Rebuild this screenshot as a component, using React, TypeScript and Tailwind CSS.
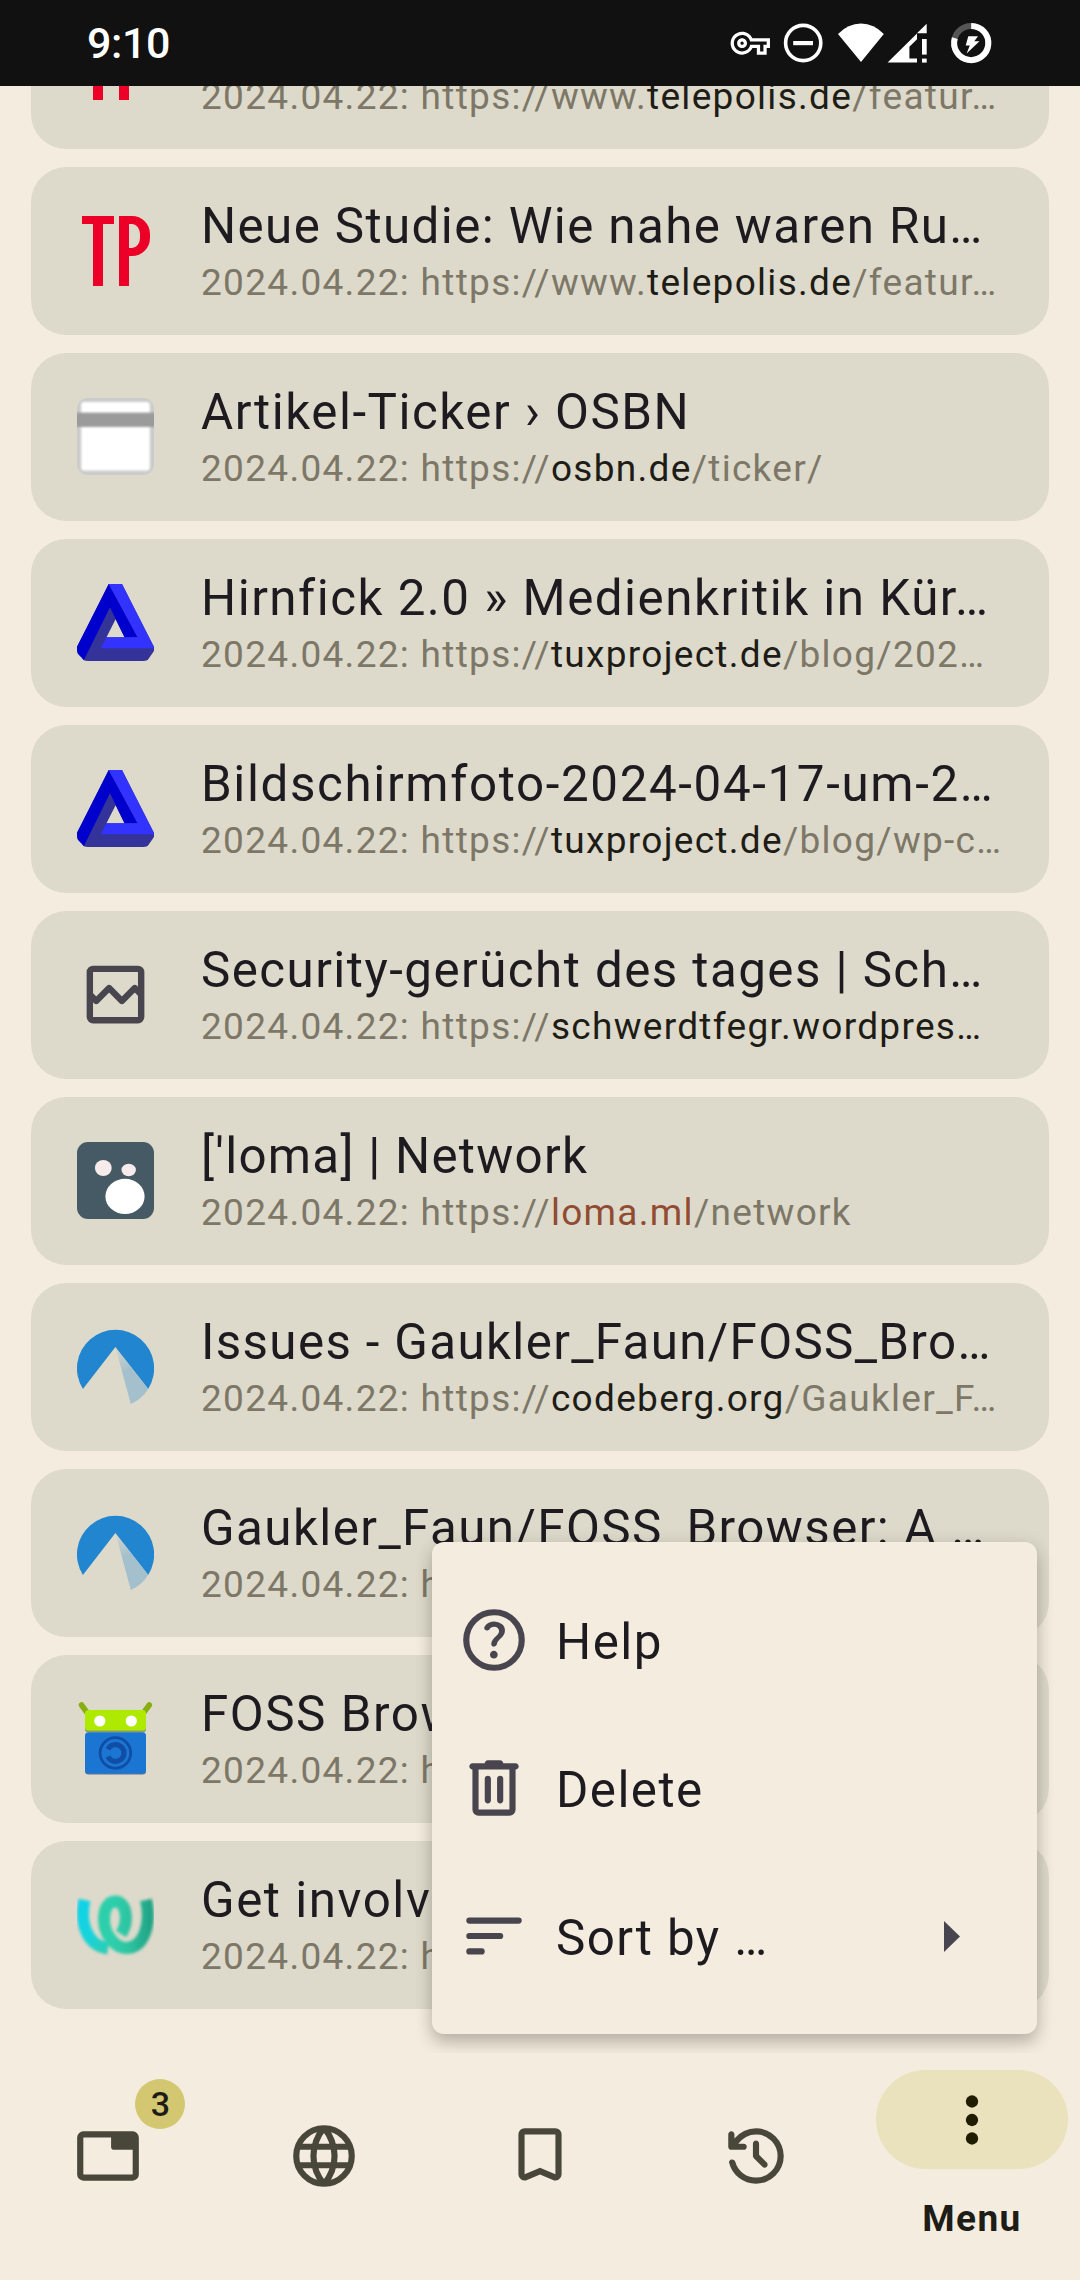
import type { ReactNode } from "react";

function TelepolisIcon() {
  return (
    <div className="flex h-[77px] w-[77px] items-start gap-[5px] pt-[3.5px] pl-[5px]">
      <div className="flex flex-col items-center">
        <div className="h-[8.5px] w-[32px] bg-[#ec0028]" />
        <div className="h-[61.5px] w-[10px] bg-[#ec0028]" />
      </div>
      <div className="flex flex-col">
        <div className="h-[40px] w-[31px] rounded-r-[18px] border-y-[8.5px] border-r-[10px] border-l-[10px] border-[#ec0028]" />
        <div className="h-[30px] w-[10px] bg-[#ec0028]" />
      </div>
    </div>
  );
}

function WindowIcon() {
  return (
    <div className="h-[77px] w-[77px] overflow-hidden rounded-[11px] bg-[#cbcbcb]">
      <svg viewBox="0 0 77 77" className="h-full w-full">
        <defs>
          <filter id="soft" x="-10%" y="-10%" width="120%" height="120%">
            <feGaussianBlur stdDeviation="0.9" />
          </filter>
        </defs>
        <rect x="4.2" y="4" width="68.6" height="68.5" rx="3" fill="#fff" filter="url(#soft)" />
        <rect x="-4" y="14.6" width="85" height="14.4" fill="#9b9b9b" filter="url(#soft)" />
      </svg>
    </div>
  );
}

function TriangleIcon() {
  return (
    <div className="h-[77px] w-[77px] overflow-hidden rounded-[11px]">
      <svg viewBox="0 0 77 77" className="h-full w-full">
        <path d="M31.7 0H45L77 63v4L70 77H6.9L0 64Z M38.6 35.3L29.5 53.3H47.5Z" fillRule="evenodd" fill="#333399" />
        <path d="M31.7 0L0 62.5V69L6.9 76L33 23.3L47.5 53.3H60.6Z" fill="#0000cc" />
        <path d="M31.7 0H45L77 63V64.3H23.8L29.5 53.3H60.6Z" fill="#3333ff" />
      </svg>
    </div>
  );
}

function BrokenImageIcon() {
  return (
    <svg viewBox="0 0 960 960" className="h-[77px] w-[77px]" fill="none" stroke="#49454f" strokeWidth="80" strokeLinejoin="round">
      <rect x="160" y="160" width="640" height="640" rx="40" />
      <path d="M160 480L240 560L400 400L560 560L720 400L800 480" />
    </svg>
  );
}

function LomaIcon() {
  return (
    <svg viewBox="0 0 77 77" className="h-[77px] w-[77px] rounded-[11px] bg-[#455a64]">
      <ellipse cx="26.3" cy="26" rx="8.4" ry="8" fill="#f7ebeb" />
      <ellipse cx="51.7" cy="28" rx="7.2" ry="6.2" fill="#f7ebeb" />
      <ellipse cx="48" cy="54.4" rx="19.6" ry="17.6" fill="#fff" />
    </svg>
  );
}

function CodebergIcon() {
  return (
    <svg viewBox="0 0 77 77" className="h-[77px] w-[77px]">
      <defs>
        <linearGradient id="slope" x1="40" y1="22" x2="56" y2="60" gradientUnits="userSpaceOnUse">
          <stop offset="0" stopColor="#a4c0cd" stopOpacity="0.2" />
          <stop offset="0.55" stopColor="#a4c0cd" />
        </linearGradient>
      </defs>
      <path d="M5.9 61A38.6 38.6 0 1 1 71.2 61L38.4 19Z" fill="#2185d0" />
      <path d="M38.4 19L71.2 61A39 39 0 0 1 53.8 76Z" fill="url(#slope)" />
    </svg>
  );
}

function FDroidIcon() {
  return (
    <svg viewBox="0 0 77 77" className="h-[77px] w-[77px]">
      <path d="M4.500 5L10 12.500M72.300 5L66.800 12.500" stroke="#88ae10" strokeWidth="5.500" strokeLinecap="round" />
      <rect x="8" y="11" width="61" height="21.4" rx="3.5" fill="#8c9f61" />
      <rect x="8" y="10" width="61" height="20.4" rx="3.5" fill="#aeea00" />
      <circle cx="22.8" cy="21" r="5.6" fill="#fff" />
      <circle cx="54.3" cy="21" r="5.6" fill="#fff" />
      <rect x="8" y="34" width="61" height="40.6" rx="3.5" fill="#5a7396" />
      <rect x="8" y="32.3" width="61" height="41.2" rx="3.5" fill="#1b76d3" />
      <circle cx="38.4" cy="53" r="15.3" fill="none" stroke="#104ea6" strokeWidth="2.8" />
      <path d="M31 49.3A8.4 8.4 0 1 1 31 56.7" fill="none" stroke="#104ea6" strokeWidth="5.2" />
    </svg>
  );
}

function WeblateIcon() {
  return (
    <div className="h-[77px] w-[77px] overflow-hidden">
      <svg viewBox="0 0 77 77" className="h-full w-full blur-[1.6px]" fill="none" strokeWidth="12">
        <defs>
          <linearGradient id="wLeft" x1="2" y1="20" x2="32" y2="62" gradientUnits="userSpaceOnUse">
            <stop offset="0" stopColor="#10d3e6" />
            <stop offset="0.6" stopColor="#17d3db" />
            <stop offset="1" stopColor="#2bcdb4" />
          </linearGradient>
          <linearGradient id="wRight" x1="36" y1="0" x2="74" y2="0" gradientUnits="userSpaceOnUse">
            <stop offset="0" stopColor="#2ccfab" />
            <stop offset="0.4" stopColor="#2dc4a2" />
            <stop offset="1" stopColor="#1fa385" />
          </linearGradient>
        </defs>
        <path d="M7.500 14C2 38 11 60 31 62.500" stroke="url(#wLeft)" />
        <path d="M44 48C52 36 50 15.500 38.400 15.500C25 15.500 24 40 33 52C38 59 43 62 49 62C67 62 74.500 38 69 14" stroke="url(#wRight)" />
      </svg>
    </div>
  );
}

type Entry = {
  icon: ReactNode;
  title: string;
  tracking?: string;
  prefix: string;
  domain: string;
  path: string;
  insecure?: boolean;
};

const entries: Entry[] = [
  { icon: <TelepolisIcon />, title: "Telepolis", prefix: "https://www.", domain: "telepolis.de", path: "/featur…" },
  { icon: <TelepolisIcon />, title: "Neue Studie: Wie nahe waren Ru…", tracking: "tracking-[1.38px]", prefix: "https://www.", domain: "telepolis.de", path: "/featur…" },
  { icon: <WindowIcon />, title: "Artikel-Ticker › OSBN", tracking: "tracking-[1.5px]", prefix: "https://", domain: "osbn.de", path: "/ticker/" },
  { icon: <TriangleIcon />, title: "Hirnfick 2.0 » Medienkritik in Kür…", tracking: "tracking-[1.48px]", prefix: "https://", domain: "tuxproject.de", path: "/blog/202…" },
  { icon: <TriangleIcon />, title: "Bildschirmfoto-2024-04-17-um-2…", tracking: "tracking-[1.62px]", prefix: "https://", domain: "tuxproject.de", path: "/blog/wp-c…" },
  { icon: <BrokenImageIcon />, title: "Security-gerücht des tages | Sch…", tracking: "tracking-[1.44px]", prefix: "https://", domain: "schwerdtfegr.wordpres…", path: "" },
  { icon: <LomaIcon />, title: "['loma] | Network", tracking: "tracking-[1.25px]", prefix: "https://", domain: "loma.ml", path: "/network", insecure: true },
  { icon: <CodebergIcon />, title: "Issues - Gaukler_Faun/FOSS_Bro…", tracking: "tracking-[1.34px]", prefix: "https://", domain: "codeberg.org", path: "/Gaukler_F…" },
  { icon: <CodebergIcon />, title: "Gaukler_Faun/FOSS_Browser: A …", tracking: "tracking-[1.42px]", prefix: "https://", domain: "codeberg.org", path: "/Gaukler_F…" },
  { icon: <FDroidIcon />, title: "FOSS Browser", prefix: "https://", domain: "f-droid.org", path: "/" },
  { icon: <WeblateIcon />, title: "Get involved", prefix: "https://", domain: "weblate.org", path: "/" },
];

function Card({ entry }: { entry: Entry }) {
  return (
    <div className="flex h-[168px] shrink-0 overflow-hidden rounded-[35px] bg-[#dedacb] pl-[46px]">
      <div className="mt-[45px] mr-[47px] shrink-0">{entry.icon}</div>
      <div className="min-w-0 pt-[29px] whitespace-nowrap">
        <div className={"h-[60px] text-[49.33px] leading-[60px] text-[#1d1b20] " + (entry.tracking ?? "tracking-[1.54px]")}>
          {entry.title}
        </div>
        <div className="mt-[3px] text-[37px] leading-[48px] tracking-[1.3px] text-[#7c7767]">
          2024.04.22: {entry.prefix}
          <span className={entry.insecure ? "text-[#904b33]" : "text-[#1d1c16]"}>{entry.domain}</span>
          {entry.path}
        </div>
      </div>
    </div>
  );
}

function Symbol({ children }: { children: ReactNode }) {
  return (
    <svg viewBox="0 -960 960 960" className="h-[74px] w-[74px]" fill="currentColor">
      {children}
    </svg>
  );
}

function StatusBar() {
  return (
    <header className="flex h-[86px] shrink-0 items-center justify-between bg-[#111111] pl-[87px] text-white">
      <span className="text-[43px] leading-[86px] font-medium tracking-[-0.4px]">9:10</span>
      <svg viewBox="720 0 280 86" className="mr-[80px] h-[86px] w-[280px]" fill="#fff">
        <path transform="translate(730.6 23.500) scale(1.64)" d="M22 19h-6v-4h-2.680c-1.140 2.420-3.600 4-6.320 4-3.860 0-7-3.140-7-7s3.140-7 7-7c2.720 0 5.170 1.580 6.320 4H24v6h-2v4zm-4-2h2v-4h2v-2H11.940l-.23-.67C11.010 8.340 9.110 7 7 7c-2.760 0-5 2.240-5 5s2.240 5 5 5c2.110 0 4.010-1.340 4.710-3.330l.23-.67H18v4zM7 15c-1.650 0-3-1.350-3-3s1.350-3 3-3 3 1.350 3 3-1.350 3-3 3zm0-4c-.55 0-1 .45-1 1s.45 1 1 1 1-.45 1-1-.45-1-1-1z" />
        <circle cx="803.2" cy="43" r="17.6" fill="none" stroke="#fff" strokeWidth="3.600" />
        <rect x="793.2" y="41" width="19.800" height="4.200" />
        <path d="M861 62L838 34Q848 23.500 861 23.500T883.800 34Z" />
        <path d="M887.6 62.600L917 33.500V39.300L909.400 46.700V58.600H917V62.600Z" />
        <path d="M926.700 23.700V33.200H917Z" />
        <rect x="922" y="39" width="4.700" height="15.600" />
        <rect x="922" y="58.600" width="4.700" height="4" />
        <circle cx="971.200" cy="43" r="17.100" fill="none" stroke="#555" strokeWidth="6" />
        <path d="M971.200 25.900A17.100 17.100 0 1 1 954.800 38.200" fill="none" stroke="#fff" strokeWidth="6" />
        <path d="M968.300 36.200H978L974.300 41.300H979.500L966.600 53.500L969.800 45.600L965.700 45.400Z" />
      </svg>
    </header>
  );
}

function PopupMenu() {
  return (
    <div className="absolute top-[1456px] left-[432px] flex h-[492px] w-[605px] flex-col rounded-[12px] bg-[#f4eddf] py-[24px] text-[49.33px] tracking-[1.45px] text-[#1d1b20] shadow-[0_9px_16px_rgba(60,58,45,0.28),0_1px_18px_rgba(60,58,45,0.10)]">
      <div className="flex h-[148px] items-center pl-[25px]">
        <span className="mr-[25px] text-[#49454f]">
          <Symbol>
            <path d="M478-240q21 0 35.500-14.500T528-290q0-21-14.500-35.500T478-340q-21 0-35.500 14.500T428-290q0 21 14.500 35.500T478-240Zm2 160q-83 0-156-31.500T197-197q-54-54-85.500-127T80-480q0-83 31.500-156T197-763q54-54 127-85.500T480-880q83 0 156 31.500T763-763q54 54 85.500 127T880-480q0 83-31.500 156T763-197q-54 54-127 85.500T480-80Zm0-80q134 0 227-93t93-227q0-134-93-227t-227-93q-134 0-227 93t-93 227q0 134 93 227t227 93Zm0-320Zm4-172q25 0 43.500 16t18.500 40q0 22-13.500 39T502-525q-23 20-40.500 44T444-427q0 14 10.500 23.500T479-394q15 0 25.500-10t13.500-25q4-21 18-37.500t30-31.500q23-22 39.500-48t16.500-58q0-51-41.500-83.500T484-720q-38 0-72.500 16T359-655q-7 12-4.500 25.500T368-609q14 8 29 5t25-17q11-15 27.500-23t34.500-8Z" />
          </Symbol>
        </span>
        <span className="pt-[4px] leading-[60px]">Help</span>
      </div>
      <div className="flex h-[148px] items-center pl-[25px]">
        <span className="mr-[25px] text-[#49454f]">
          <Symbol>
            <path d="M280-120q-33 0-56.500-23.500T200-200v-520q-17 0-28.500-11.500T160-760q0-17 11.500-28.500T200-800h160q0-17 11.500-28.500T400-840h160q17 0 28.500 11.500T600-800h160q17 0 28.500 11.500T800-760q0 17-11.500 28.500T760-720v520q0 33-23.500 56.500T680-120H280Zm400-600H280v520h400v-520ZM400-280q17 0 28.500-11.500T440-320v-280q0-17-11.500-28.500T400-640q-17 0-28.500 11.500T360-600v280q0 17 11.500 28.500T400-280Zm160 0q17 0 28.500-11.500T600-320v-280q0-17-11.500-28.500T560-640q-17 0-28.500 11.500T520-600v280q0 17 11.500 28.500T560-280Z" />
          </Symbol>
        </span>
        <span className="pt-[4px] leading-[60px]">Delete</span>
      </div>
      <div className="flex h-[148px] items-center pl-[25px]">
        <span className="mr-[25px] text-[#49454f]">
          <Symbol>
            <path d="M160-680H800M160-480H560M160-280H320" fill="none" stroke="currentColor" strokeWidth="80" strokeLinecap="round" />
          </Symbol>
        </span>
        <span className="flex-1 pt-[4px] leading-[60px]">Sort by …</span>
        <svg viewBox="0 0 16 31" className="mr-[77px] h-[31px] w-[16px]" fill="#49454f">
          <path d="M0 0L16 15.500L0 31Z" />
        </svg>
      </div>
    </div>
  );
}

function BottomNav() {
  return (
    <nav className="grid h-[227px] shrink-0 grid-cols-5 text-[#49473a]">
      <div className="relative flex justify-center pt-[66px]">
        <Symbol>
          <rect x="120" y="-760" width="720" height="560" rx="40" fill="none" stroke="currentColor" strokeWidth="80" />
          <path d="M520-780H840V-560H560Q520-560 520-600Z" />
        </Symbol>
        <span className="absolute top-[26px] left-[135px] flex h-[50px] w-[50px] items-center justify-center rounded-full bg-[#d3c871] pl-[1px] text-[34px] leading-none font-medium text-[#1d1c16]">
          3
        </span>
      </div>
      <div className="flex justify-center pt-[66px]">
        <Symbol>
          <g fill="none" stroke="currentColor" strokeWidth="80">
            <circle cx="480" cy="-480" r="360" />
            <path d="M150-600H810M150-360H810M480-850C385-730 343-610 343-480S385-230 480-110M480-850C575-730 617-610 617-480S575-230 480-110" />
          </g>
        </Symbol>
      </div>
      <div className="flex justify-center pt-[66px]">
        <Symbol>
          <path d="M480-240l-168 72q-40 17-76-6.500T200-241v-519q0-33 23.500-56.500T280-840h400q33 0 56.500 23.500T760-760v519q0 43-36 66.500t-76 6.500l-168-72Zm0-88 200 86v-518H280v518l200-86Z" />
        </Symbol>
      </div>
      <div className="flex justify-center pt-[66px]">
        <Symbol>
          <path d="M480-120q-126 0-223-76.500T131-392q-4-15 6-27.500t27-14.500q16-2 29 6t18 24q24 90 99 147t170 57q117 0 198.500-81.500T760-480q0-117-81.500-198.500T480-760q-69 0-129 32t-101 88h70q17 0 28.500 11.500T360-600q0 17-11.500 28.500T320-560H160q-17 0-28.500-11.500T120-600v-160q0-17 11.500-28.500T160-800q17 0 28.500 11.500T200-760v54q51-64 124.500-99T480-840q75 0 140.500 28.500t114 77q48.500 48.500 77 114T840-480q0 75-28.500 140.500t-77 114q-48.500 48.500-114 77T480-120Zm40-376 100 100q11 11 11 28t-11 28q-11 11-28 11t-28-11L452-452q-6-6-9-13.500t-3-15.500v-159q0-17 11.500-28.500T480-680q17 0 28.500 11.500T520-640v144Z" />
        </Symbol>
      </div>
      <div className="flex flex-col items-center pt-[17px]">
        <div className="flex h-[99px] w-[192px] items-center justify-center rounded-full bg-[#eae2bc] text-[#1f1c00]">
          <Symbol>
            <circle cx="480" cy="-720" r="80" />
            <circle cx="480" cy="-480" r="80" />
            <circle cx="480" cy="-240" r="80" />
          </Symbol>
        </div>
        <span className="mt-[26px] text-[37px] leading-[48px] font-bold tracking-[1.4px] text-[#1d1c16]">Menu</span>
      </div>
    </nav>
  );
}

export default function App() {
  return (
    <div className="flex h-[2280px] w-[1080px] flex-col overflow-hidden bg-[#f4eddf] font-['Roboto',sans-serif]">
      <StatusBar />
      <main className="relative flex h-[1967px] shrink-0 flex-col overflow-hidden">
        <div className="-mt-[105px] flex flex-col gap-[18px] px-[31px]">
          {entries.map((entry, i) => (
            <Card key={i} entry={entry} />
          ))}
        </div>
        <PopupMenu />
      </main>
      <BottomNav />
    </div>
  );
}
